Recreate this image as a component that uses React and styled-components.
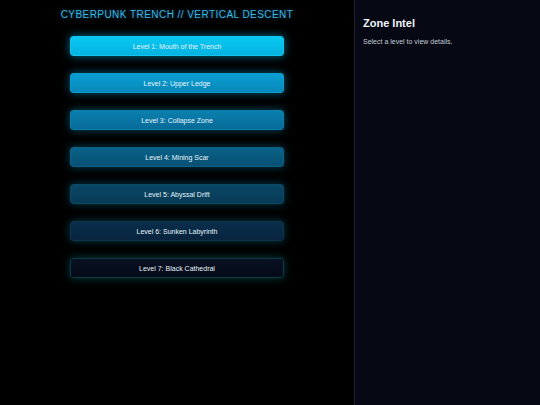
import styled, { createGlobalStyle } from "styled-components";

const GlobalStyle = createGlobalStyle`
  html, body {
    margin: 0;
    padding: 0;
    background: #000;
    font-family: "Liberation Sans", Arial, sans-serif;
  }
`;

const Page = styled.div`
  display: flex;
  width: 100%;
  height: 405px;
  background: #000;
`;

const Descent = styled.main`
  flex: 1;
  display: flex;
  flex-direction: column;
  align-items: center;
  padding-top: 9px;
`;

const Title = styled.h1`
  margin: 0 0 15px;
  font-size: 10px;
  line-height: 12px;
  font-weight: 400;
  letter-spacing: 0.45px;
  color: #3cb8e2;
  text-shadow: 0 0 4px rgba(0, 170, 230, 0.5);
`;

const Levels = styled.div`
  display: flex;
  flex-direction: column;
  gap: 17px;
`;

const LevelButton = styled.button`
  width: 214px;
  height: 20px;
  border-radius: 3px;
  border: 1px solid ${(p) => p.$edge};
  background: linear-gradient(${(p) => p.$top}, ${(p) => p.$bottom});
  box-shadow: 0 0 9px ${(p) => p.$glow};
  color: #e6f4fa;
  font-family: "Liberation Sans", Arial, sans-serif;
  font-size: 7px;
  cursor: pointer;
  padding: 0;
`;

const Intel = styled.aside`
  width: 177px;
  padding: 16px 0 0 8px;
  background: #060914;
  border-left: 1px solid #1b2234;
`;

const IntelTitle = styled.h2`
  margin: 0 0 8px;
  font-size: 11px;
  line-height: 14px;
  font-weight: 700;
  color: #f2f4f8;
`;

const IntelText = styled.p`
  margin: 0;
  font-size: 7px;
  color: #c3cad6;
`;

const levels = [
  { name: "Level 1: Mouth of the Trench", top: "#08c8f2", bottom: "#06b2e0", edge: "#12c4ee", glow: "rgba(0,190,240,0.6)" },
  { name: "Level 2: Upper Ledge", top: "#0a9ed0", bottom: "#0888ba", edge: "#0c9ccc", glow: "rgba(0,170,225,0.55)" },
  { name: "Level 3: Collapse Zone", top: "#0a80ae", bottom: "#086a98", edge: "#0c7eaa", glow: "rgba(0,160,210,0.5)" },
  { name: "Level 4: Mining Scar", top: "#0a6288", bottom: "#085074", edge: "#0d6084", glow: "rgba(0,150,200,0.45)" },
  { name: "Level 5: Abyssal Drift", top: "#0a4866", bottom: "#083a56", edge: "#0e4862", glow: "rgba(0,150,190,0.42)" },
  { name: "Level 6: Sunken Labyrinth", top: "#0a2e4c", bottom: "#08243e", edge: "#0e3448", glow: "rgba(0,150,180,0.4)" },
  { name: "Level 7: Black Cathedral", top: "#071022", bottom: "#050a18", edge: "#0f3a44", glow: "rgba(0,160,170,0.4)" },
];

const App = () => {
  return (
    <>
      <GlobalStyle />
      <Page>
        <Descent>
          <Title>CYBERPUNK TRENCH // VERTICAL DESCENT</Title>
          <Levels>
            {levels.map((lvl) => (
              <LevelButton
                key={lvl.name}
                $top={lvl.top}
                $bottom={lvl.bottom}
                $edge={lvl.edge}
                $glow={lvl.glow}
              >
                {lvl.name}
              </LevelButton>
            ))}
          </Levels>
        </Descent>
        <Intel>
          <IntelTitle>Zone Intel</IntelTitle>
          <IntelText>Select a level to view details.</IntelText>
        </Intel>
      </Page>
    </>
  );
};

export default App;
